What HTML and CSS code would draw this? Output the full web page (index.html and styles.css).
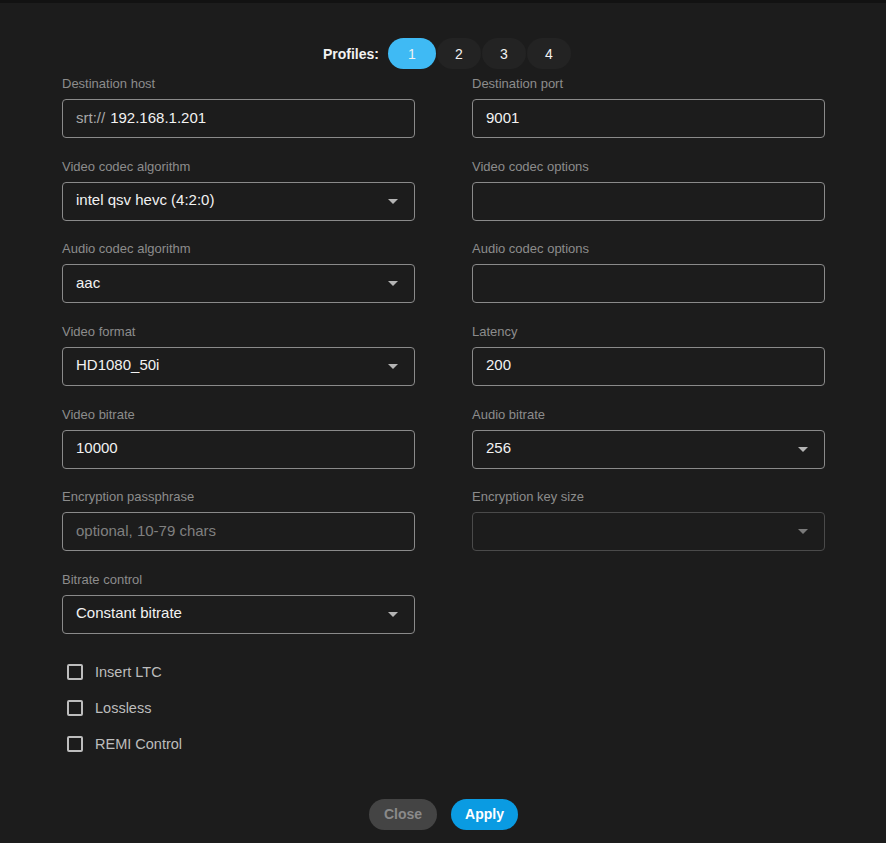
FILE: index.html
```html
<!DOCTYPE html>
<html lang="en">
<head>
<meta charset="UTF-8">
<meta name="viewport" content="width=device-width, initial-scale=1.0">
<title>Stream Settings</title>
<link rel="stylesheet" href="styles.css">
</head>
<body>

<div class="dialog">

    <div class="profiles">
        <span class="profiles-label">Profiles:</span>
        <button class="profile-btn active">1</button>
        <button class="profile-btn">2</button>
        <button class="profile-btn">3</button>
        <button class="profile-btn">4</button>
    </div>

    <div class="form-grid">
        <div class="field">
            <label for="host">Destination host</label>
            <div class="input-box">
                <span class="prefix">srt://</span>
                <input type="text" id="host" value="192.168.1.201">
            </div>
        </div>
        <div class="field">
            <label for="port">Destination port</label>
            <div class="input-box">
                <input type="text" id="port" value="9001">
            </div>
        </div>

        <div class="field">
            <label>Video codec algorithm</label>
            <div class="select-box">intel qsv hevc (4:2:0)</div>
        </div>
        <div class="field">
            <label for="vopts">Video codec options</label>
            <div class="input-box">
                <input type="text" id="vopts">
            </div>
        </div>

        <div class="field">
            <label>Audio codec algorithm</label>
            <div class="select-box">aac</div>
        </div>
        <div class="field">
            <label for="aopts">Audio codec options</label>
            <div class="input-box">
                <input type="text" id="aopts">
            </div>
        </div>

        <div class="field">
            <label>Video format</label>
            <div class="select-box">HD1080_50i</div>
        </div>
        <div class="field">
            <label for="latency">Latency</label>
            <div class="input-box">
                <input type="text" id="latency" value="200">
            </div>
        </div>

        <div class="field">
            <label for="vbitrate">Video bitrate</label>
            <div class="input-box">
                <input type="text" id="vbitrate" value="10000">
            </div>
        </div>
        <div class="field">
            <label>Audio bitrate</label>
            <div class="select-box">256</div>
        </div>

        <div class="field">
            <label for="pass">Encryption passphrase</label>
            <div class="input-box">
                <input type="text" id="pass" placeholder="optional, 10-79 chars">
            </div>
        </div>
        <div class="field">
            <label>Encryption key size</label>
            <div class="select-box disabled"></div>
        </div>

        <div class="field">
            <label>Bitrate control</label>
            <div class="select-box">Constant bitrate</div>
        </div>
    </div>

    <div class="checks">
        <label class="check"><span class="box"></span>Insert LTC</label>
        <label class="check"><span class="box"></span>Lossless</label>
        <label class="check"><span class="box"></span>REMI Control</label>
    </div>

    <div class="actions">
        <button class="btn btn-close">Close</button>
        <button class="btn btn-apply">Apply</button>
    </div>

</div>

</body>
</html>
```

FILE: styles.css
```css
body {
    font-family: "Liberation Sans", Arial, sans-serif;
    margin: 0;
    padding: 0;
    background-color: #1c1c1c;
    border-top: 3px solid #121212;
    min-height: 840px;
}

.dialog {
    padding: 35px 61px 0 62px;
}

/* profile switcher */
.profiles {
    display: flex;
    justify-content: center;
    align-items: center;
    gap: 1px;
    padding-left: 7px;
}
.profiles-label {
    color: #f2f2f2;
    font-weight: bold;
    font-size: 14px;
    margin-right: 8px;
}
.profile-btn {
    width: 44px;
    height: 31px;
    border: none;
    border-radius: 16px;
    background-color: #232323;
    color: #f2f2f2;
    font-family: inherit;
    font-size: 14px;
    padding: 0;
}
.profile-btn.active {
    width: 48px;
    background-color: #3fbaf4;
}

/* form */
.form-grid {
    display: grid;
    grid-template-columns: 353px 353px;
    column-gap: 57px;
    row-gap: 20.67px;
    margin-top: 7px;
}
.field label {
    display: block;
    color: #8c8c8c;
    font-size: 13px;
    line-height: 16px;
    margin-bottom: 7px;
}
.input-box,
.select-box {
    box-sizing: border-box;
    height: 39px;
    border: 1px solid #8a8a8a;
    border-radius: 4px;
    display: flex;
    align-items: center;
    padding: 0 13px 3px 13px;
    font-size: 15px;
    color: #f2f2f2;
    position: relative;
}
.input-box .prefix {
    color: #a8a8a8;
    margin-right: 5px;
}
.input-box input {
    flex: 1;
    min-width: 0;
    background: transparent;
    border: none;
    outline: none;
    padding: 0;
    color: #f2f2f2;
    font-family: inherit;
    font-size: 15px;
}
.input-box input::placeholder {
    color: #808080;
}
.select-box::after {
    content: "";
    position: absolute;
    right: 16px;
    top: 16px;
    border-left: 5px solid transparent;
    border-right: 5px solid transparent;
    border-top: 5px solid #b4b4b4;
}
.select-box.disabled {
    border-color: #4a4a4a;
}
.select-box.disabled::after {
    border-top-color: #7a7a7a;
}

/* checkboxes */
.checks {
    margin-top: 20px;
}
.check {
    display: flex;
    align-items: center;
    height: 36px;
    color: #bdbdbd;
    font-size: 14.5px;
}
.check .box {
    box-sizing: border-box;
    width: 16px;
    height: 16px;
    border: 2px solid #bdbdbd;
    border-radius: 2px;
    margin-left: 5px;
    margin-right: 12px;
}

/* bottom buttons */
.actions {
    display: flex;
    justify-content: center;
    gap: 14px;
    margin-top: 37px;
}
.btn {
    height: 31px;
    border: none;
    border-radius: 16px;
    font-family: inherit;
    font-weight: bold;
    font-size: 14px;
    padding: 0;
}
.btn-close {
    width: 68px;
    background-color: #444444;
    color: #8a8a8a;
}
.btn-apply {
    width: 67px;
    background-color: #0a9be2;
    color: #ffffff;
}
```
